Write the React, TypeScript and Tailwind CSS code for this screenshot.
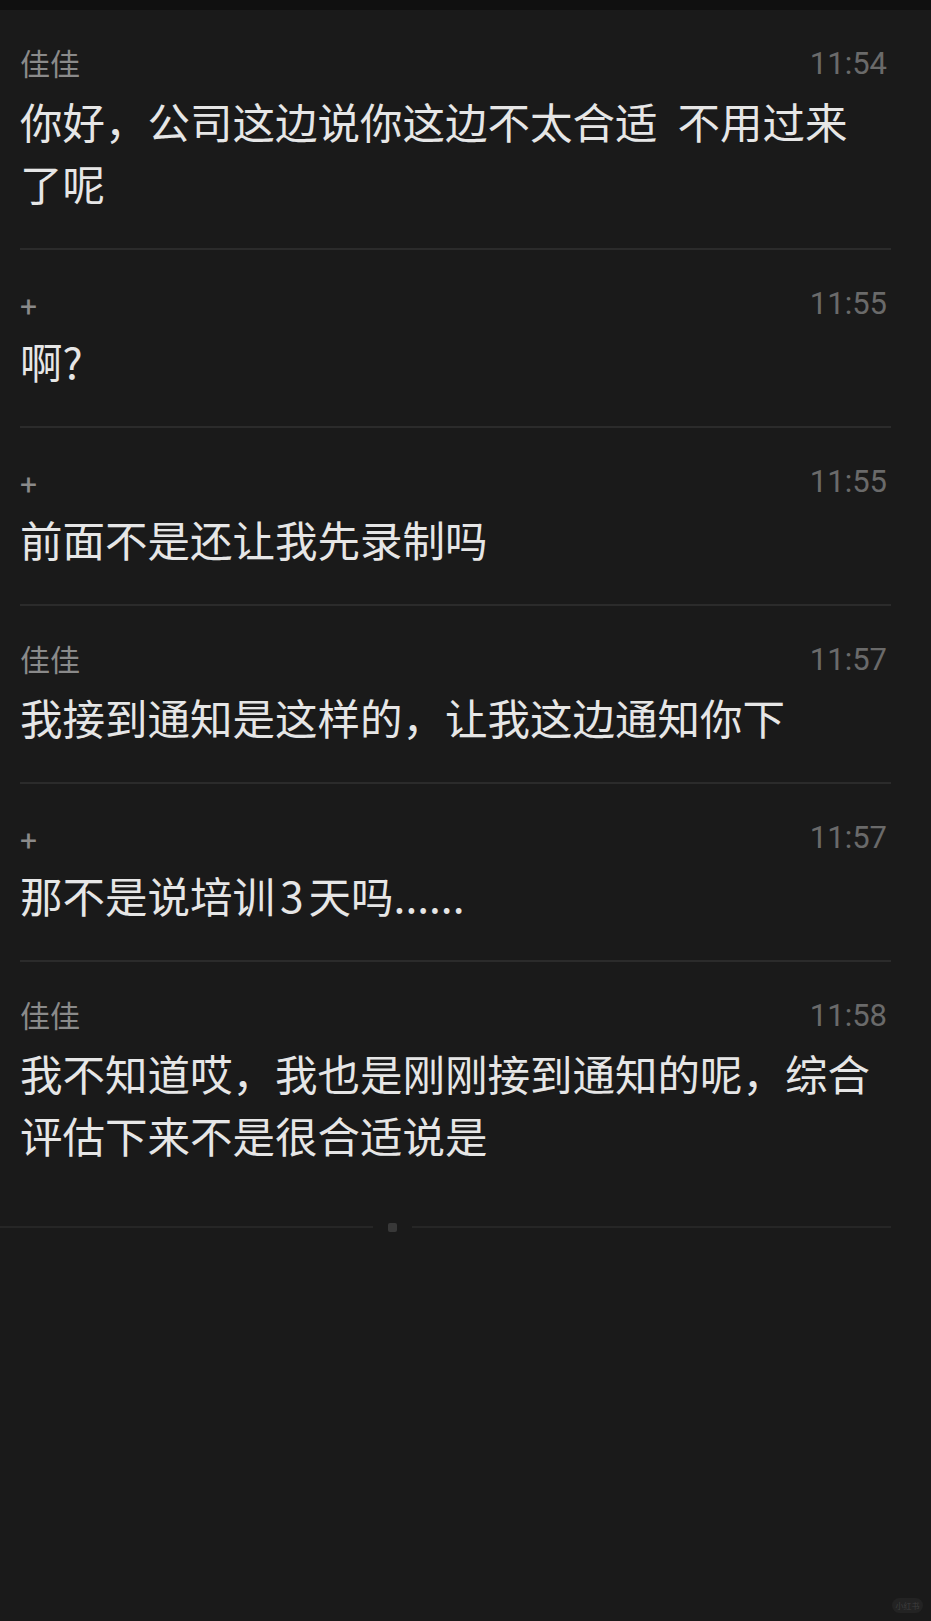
import React from "react";

type Msg = { who: string; time: string; lines: React.ReactNode[] };

const msgs: Msg[] = [
  {
    who: "佳佳",
    time: "11:54",
    lines: [
      <>
        你好，公司这边说你这边不太合适<span className="inline-block w-[20px]"> </span>不用过来
      </>,
      <>了呢</>,
    ],
  },
  { who: "+", time: "11:55", lines: [<>啊?</>] },
  { who: "+", time: "11:55", lines: [<>前面不是还让我先录制吗</>] },
  { who: "佳佳", time: "11:57", lines: [<>我接到通知是这样的，让我这边通知你下</>] },
  {
    who: "+",
    time: "11:57",
    lines: [
      <>
        那不是说培训<span className="px-[5px]">3</span>天吗......
      </>,
    ],
  },
  {
    who: "佳佳",
    time: "11:58",
    lines: [<>我不知道哎，我也是刚刚接到通知的呢，综合</>, <>评估下来不是很合适说是</>],
  },
];

const cjk = "font-['Noto_Sans_CJK_SC','Noto_Sans',sans-serif]";

export default function App() {
  return (
    <div className={`relative min-h-[1621px] w-full bg-[#1a1a1a] ${cjk}`}>
      <div className="h-[10px] bg-[#101010]" />
      <div className="pl-[20px] pr-[40px]">
        {msgs.map((m, i) => {
          const last = i === msgs.length - 1;
          return (
            <div
              key={i}
              className={
                last
                  ? "pt-[34px] pb-[56px]"
                  : "pt-[34px] pb-[34px] border-b-2 border-[#2b2b2b]"
              }
            >
              <div className="flex h-[40px] items-center justify-between">
                <span
                  className={
                    m.who === "+"
                      ? "pt-[6px] font-['Roboto',sans-serif] text-[30px] leading-[40px] text-[#8a8a8a]"
                      : "pb-[4px] text-[30px] leading-[40px] text-[#8a8a8a]"
                  }
                >
                  {m.who}
                </span>
                <span className="pr-[4px] font-['Roboto',sans-serif] text-[31px] leading-[40px] text-[#6a6a6a]">
                  {m.time}
                </span>
              </div>
              <div className="mt-[6px] text-[42.5px] leading-[62px] text-[#e6e6e6]">
                {m.lines.map((l, j) => (
                  <div key={j} className="whitespace-nowrap">
                    {l}
                  </div>
                ))}
              </div>
            </div>
          );
        })}
      </div>
      <div className="flex h-[10px] items-center pr-[40px]">
        <div className="h-[2px] w-[373px] bg-[#262626]" />
        <div className="ml-[15px] h-[9px] w-[9px] rounded-[2px] bg-[#383838]" />
        <div className="ml-[15px] h-[2px] flex-1 bg-[#262626]" />
      </div>
      <div className="absolute bottom-[8px] right-[8px] flex h-[15px] w-[31px] items-center justify-center rounded-full bg-[#232323] text-[8px] leading-none text-[#3e3e3e]">
        小红书
      </div>
    </div>
  );
}
